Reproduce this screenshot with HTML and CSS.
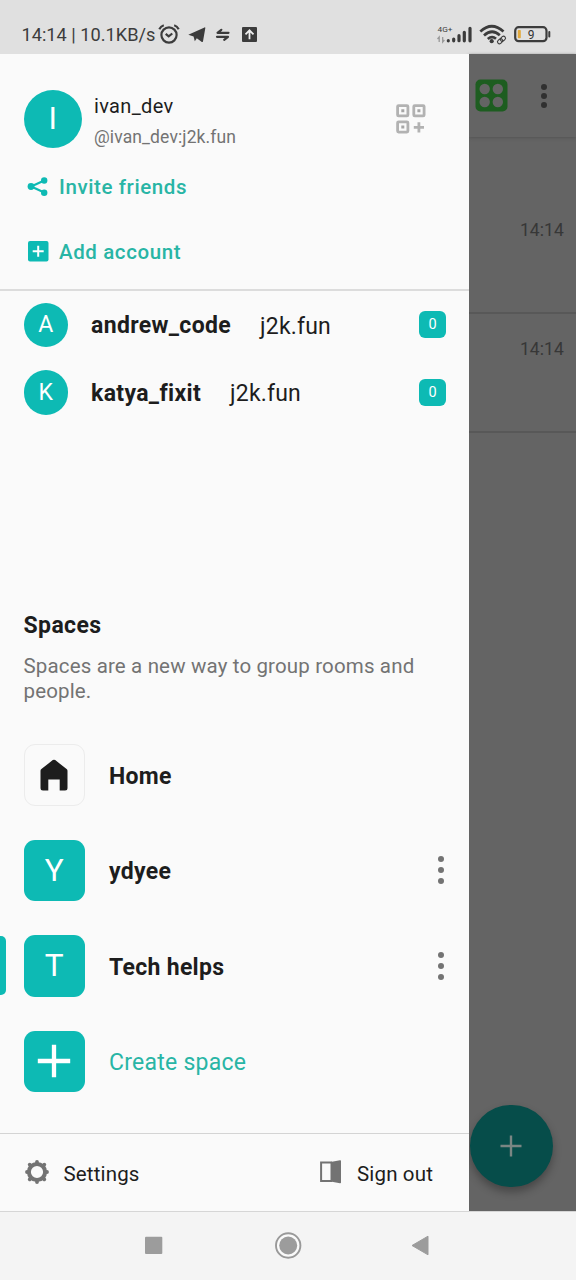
FILE: index.html
```html
<!DOCTYPE html>
<html lang="en">
<head>
<meta charset="utf-8">
<title>Spaces</title>
<link rel="stylesheet" href="styles.css">
</head>
<body>
<div class="screen">
  <header class="status">
    <span class="status-text">14:14 | 10.1KB/s</span>
    <svg class="status-left" width="104" height="26" viewBox="156 21 104 26">
      <g fill="none" stroke="#3c3c3c" stroke-width="2.200">
        <circle cx="169" cy="35" r="7.600"/>
        <path d="M165.700 33.800l3 2.500 3.600-2.800M159.300 29.200q1.500-3 4.500-3.900M178.700 29.200q-1.500-3-4.500-3.900"/>
      </g>
      <path fill="#3c3c3c" d="M188.300 34.800L204.500 27.400c.6-.2 1 .1.8.800L203 41.200c-.2.900-.9 1.100-1.500.6L196.800 38.300l-2 3-1.200-4.700z"/>
      <path fill="none" stroke="#3c3c3c" stroke-width="2.200" stroke-linecap="round" stroke-linejoin="round" d="M228.500 32.800H217.500l3.800-3M217 36.800H228l-3.800 3"/>
      <rect x="242" y="27" width="15" height="15" rx="1" fill="#3c3c3c"/>
      <path fill="none" stroke="#eee" stroke-width="1.800" d="M249.500 39.200V30.500M245.500 34.300l4-4 4 4"/>
    </svg>
    <svg class="status-right" width="120" height="26" viewBox="434 21 120 26">
      <text class="net-label" x="437.500" y="31.500" textLength="15" lengthAdjust="spacingAndGlyphs">4G+</text>
      <path fill="none" stroke="#999" stroke-width="1.300" d="M439.200 42v-5l-1.700 2M442.700 37v5l1.700-2"/>
      <path fill="none" stroke="#3c3c3c" stroke-width="3.200" stroke-linecap="round" d="M448.300 40.700V40.800M453.700 39v1.800M459 35.700v5M464.300 32.300v8.500M470 28.300v12.500"/>
      <g fill="none" stroke="#3c3c3c" stroke-width="2.700">
        <path d="M480.300 31.500q11.500-10.500 23.200 0M484 35.500q8-7.300 15.800-.3M487.800 39q4.200-3.600 8.200-.2"/>
      </g>
      <circle cx="491.700" cy="41.200" r="2.100" fill="#3c3c3c"/>
      <g fill="none" stroke="#e0e0e0" stroke-width="3"><rect x="-4.600" y="-2" width="9.200" height="4" rx="2" transform="translate(501.500 40) rotate(-42)"/></g>
      <g fill="none" stroke="#3c3c3c" stroke-width="1.100" transform="translate(501.500 40) rotate(-42)"><rect x="-4.700" y="-1.900" width="5.600" height="3.800" rx="1.900"/><rect x="-.9" y="-1.900" width="5.600" height="3.800" rx="1.900"/></g>
      <rect x="515.200" y="27.200" width="31.300" height="14" rx="3.500" fill="none" stroke="#3c3c3c" stroke-width="2.200"/>
      <path d="M549.300 32v4.500" stroke="#3c3c3c" stroke-width="2" stroke-linecap="round"/>
      <rect x="517.800" y="30" width="3" height="8.300" rx=".8" fill="#e2a93c"/>
      <text class="battery-label" x="531" y="38.700" text-anchor="middle">9</text>
    </svg>
  </header>

  <div class="body">
    <main class="drawer">
      <section class="account">
        <div class="profile">
          <div class="avatar avatar-lg">I</div>
          <div class="who">
            <div class="name">ivan_dev</div>
            <div class="mxid">@ivan_dev:j2k.fun</div>
          </div>
          <svg class="qr" width="30" height="30" viewBox="0 0 30 30">
            <g fill="none" stroke="#b2b2b2" stroke-width="2.800">
              <rect x="1.600" y="1.600" width="10.300" height="10.300" rx="1"/>
              <rect x="17.800" y="1.600" width="10.300" height="10.300" rx="1"/>
              <rect x="1.600" y="17.800" width="10.300" height="10.300" rx="1"/>
              <path d="M22.900 18.200v10.200M17.800 23.300H28"/>
            </g>
            <path fill="#a6a6a6" d="M5.300 5.300h3v3h-3zM21.400 5.300h3v3h-3zM5.300 21.500h3v3h-3z"/>
          </svg>
        </div>
        <div class="action">
          <svg width="22" height="22" viewBox="0 0 22 22"><path d="M17.200 4.500L4.200 10.500l13 6" fill="none" stroke="#0dbab4" stroke-width="2.200"/><g fill="#0dbab4"><circle cx="17.200" cy="4.500" r="3.200"/><circle cx="4" cy="10.500" r="3.400"/><circle cx="17.200" cy="16.700" r="3.200"/></g></svg>
          <span>Invite friends</span>
        </div>
        <div class="action">
          <svg width="22" height="22" viewBox="0 0 22 22"><rect x="1" y="0" width="20.500" height="20.500" rx="2" fill="#0dbab4"/><path d="M11.200 4.700v11M5.700 10.200h11" stroke="#fff" stroke-width="2"/></svg>
          <span>Add account</span>
        </div>
      </section>

      <section class="others">
        <div class="other"><div class="avatar avatar-sm">A</div><span class="other-name">andrew_code</span><span class="server">j2k.fun</span><span class="badge">0</span></div>
        <div class="other"><div class="avatar avatar-sm">K</div><span class="other-name">katya_fixit</span><span class="server">j2k.fun</span><span class="badge">0</span></div>
      </section>

      <section class="spaces">
        <h2 class="heading">Spaces</h2>
        <p class="intro">Spaces are a new way to group rooms and people.</p>
        <div class="space">
          <div class="tile tile-home"><svg width="28" height="32" viewBox="0 0 28 32"><path fill="#1d1d1d" d="M14 .7q.7 0 1.200.4L26.600 10q.9.700.9 1.800V29q0 2.500-2.500 2.500H19.700V20.600H8.300V31.500H3Q.5 31.500.5 29V11.800q0-1.100.9-1.800L12.800 1.100q.5-.4 1.200-.4z"/></svg></div>
          <span class="space-name">Home</span>
        </div>
        <div class="space"><div class="tile">Y</div><span class="space-name">ydyee</span><span class="more"><i></i><i></i><i></i></span></div>
        <div class="space selected"><div class="tile">T</div><span class="space-name">Tech helps</span><span class="more"><i></i><i></i><i></i></span></div>
        <div class="space">
          <div class="tile"><svg width="34" height="34" viewBox="0 0 34 34"><path d="M17 .8v32.400M.8 17h32.400" stroke="#fff" stroke-width="4.300"/></svg></div>
          <span class="space-name create">Create space</span>
        </div>
      </section>

      <footer class="footer">
        <svg class="gear" width="26" height="26" viewBox="-13 -13 26 26"><circle r="8.100" fill="none" stroke="#737373" stroke-width="4"/><g stroke="#737373" stroke-width="3.800" stroke-linecap="round"><path d="M0-9.800v-.2M0 9.800v.2M-9.800 0h-.2M9.800 0h.2M-7.100-7.100l-.2-.2M7.100-7.100l.2-.2M-7.100 7.100l-.2.2M7.100 7.100l.2.2"/></g></svg>
        <span class="settings">Settings</span>
        <svg class="door" width="22" height="24" viewBox="0 0 22 24"><path d="M12 2.400H1.100V21H12" fill="none" stroke="#737373" stroke-width="2"/><path d="M10.500 2L20 .2q1-.2 1 .8v21.500q0 1-1 .8L10.500 21.500z" fill="#737373"/></svg>
        <span class="signout">Sign out</span>
      </footer>
    </main>

    <aside class="behind">
      <div class="toolbar">
        <svg width="33" height="33" viewBox="0 0 33 33"><rect x=".5" y=".5" width="32" height="32" rx="5" fill="#1d5d20"/><g fill="#646464"><circle cx="9.700" cy="10" r="5.200"/><circle cx="22.800" cy="10" r="5.200"/><circle cx="9.700" cy="23" r="5.200"/><circle cx="22.800" cy="23" r="5.200"/></g></svg>
        <span class="more more-dark"><i></i><i></i><i></i></span>
      </div>
      <div class="room room-first">14:14</div>
      <div class="room">14:14</div>
      <div class="fab"><svg width="22" height="22" viewBox="0 0 22 22"><path d="M11 .5v21M.5 11h21" stroke="#7a8683" stroke-width="2.400"/></svg></div>
    </aside>
  </div>

  <nav class="nav">
    <svg width="576" height="68" viewBox="0 1212 576 68">
      <rect x="145" y="1236.700" width="17.300" height="17.300" rx="1" fill="#9c9c9c"/>
      <circle cx="288.200" cy="1245.500" r="12.200" fill="#fafafa" stroke="#999" stroke-width="1.900"/>
      <circle cx="288.200" cy="1245.500" r="9" fill="#9c9c9c"/>
      <path d="M412 1245.500l16-9.300v18.600z" fill="#9c9c9c" stroke="#9c9c9c" stroke-width="1" stroke-linejoin="round"/>
    </svg>
  </nav>
</div>
</body>
</html>
```
FILE: styles.css
```css
* { box-sizing: border-box; }
body { margin: 0; font-family: Roboto, sans-serif; color: #1d1d1d; }
svg { display: block; flex: none; }
.screen { width: 576px; height: 1280px; display: flex; flex-direction: column; overflow: hidden; background: #fafafa; }

.status { height: 54px; flex: none; background: #e0e0e0; display: flex; align-items: flex-start; padding: 21px 22px 0 21.500px; color: #3c3c3c; }
.status-text { width: 134.500px; font-size: 18.200px; line-height: 28px; letter-spacing: 0; white-space: nowrap; }
.status-right { margin-left: auto; }
.net-label { font-size: 8px; fill: #3c3c3c; }
.battery-label { font-size: 12px; fill: #333; }

.body { height: 1157px; flex: none; display: flex; }
.drawer { width: 469px; flex: none; background: #fafafa; display: flex; flex-direction: column; position: relative; z-index: 1; }

.account { height: 237px; border-bottom: 2px solid #dcdcdc; }
.profile { height: 101px; padding: 35.500px 43px 0 23.500px; display: flex; align-items: flex-start; }
.avatar { border-radius: 50%; background: #0dbab4; color: #fff; display: flex; align-items: center; justify-content: center; flex: none; }
.avatar-lg { width: 58.500px; height: 58.500px; font-size: 31px; font-weight: 400; }
.avatar-sm { width: 44.500px; height: 44.500px; font-size: 23px; font-weight: 400; }
.who { padding: 1.500px 0 0 12px; white-space: nowrap; }
.name { font-size: 20px; line-height: 30px; letter-spacing: .35px; }
.mxid { font-size: 17.500px; line-height: 32px; letter-spacing: .12px; color: #737373; }
.qr { margin: 14.500px 0 0 auto; }
.action { height: 64.500px; display: flex; align-items: center; gap: 10px; padding-left: 27px; color: #28b5a5; font-size: 20.500px; font-weight: 500; white-space: nowrap; letter-spacing: .6px; }

.other { height: 67.500px; padding: 0 23px 0 23.500px; display: flex; align-items: center; font-size: 23px; white-space: nowrap; }
.other-name { margin-left: 23px; padding-top: 2px; font-weight: 700; letter-spacing: .35px; }
.server { margin-left: 29px; padding-top: 3px; letter-spacing: .2px; }
.badge { margin-left: auto; width: 27px; height: 27px; border-radius: 6px; background: #0dbab4; color: #fff; font-size: 14.500px; line-height: 28px; text-align: center; }

.spaces { margin-top: 183px; }
.heading { margin: 0; padding-left: 23.500px; font-size: 23px; line-height: 33px; font-weight: 700; letter-spacing: .4px; }
.intro { margin: 12px 23px 0 23.500px; font-size: 20.500px; line-height: 24.500px; letter-spacing: .15px; color: #737373; }
.space { height: 95.500px; padding: 0 23px 0 23.500px; display: flex; align-items: center; position: relative; }
.intro + .space { margin-top: 24px; }
.tile { width: 61.500px; height: 61.500px; flex: none; border-radius: 11px; background: #0dbab4; color: #fff; font-size: 31.500px; font-weight: 400; display: flex; align-items: center; justify-content: center; }
.tile-home { background: #fafafa; border: 1.500px solid #ececec; }
.space-name { margin-left: 24px; padding-top: 3px; font-size: 23px; font-weight: 700; letter-spacing: .3px; white-space: nowrap; }
.create { font-weight: 400; color: #28b5a5; letter-spacing: .25px; }
.selected::before { content: ""; position: absolute; left: 0; top: 18px; width: 6px; height: 59px; background: #0dbab4; border-radius: 0 5px 5px 0; }
.more { margin-left: auto; margin-right: 2px; display: flex; flex-direction: column; gap: 5px; }
.more i { width: 6px; height: 6px; border-radius: 50%; background: #737373; }

.footer { margin-top: auto; height: 78px; border-top: 1px solid #d4d4d4; display: flex; align-items: center; padding: 0 36px 0 24px; font-size: 20.500px; letter-spacing: .15px; white-space: nowrap; }
.settings { margin-left: 13.500px; padding-top: 2px; }
.gear, .door { margin-bottom: 2px; }
.door { margin-left: auto; }
.signout { margin-left: 15px; padding-top: 2px; }

.behind { flex: 1; background: #646464; position: relative; display: flex; flex-direction: column; }
.toolbar { height: 83px; display: flex; align-items: center; padding: 0 29.500px 0 6px; box-shadow: 0 1px 3px #545454; }
.more-dark { gap: 3px; margin-right: 0; }
.more-dark i { background: #303030; }
.room { height: 119px; border-bottom: 2px solid #585858; padding: 20px 12px 0 0; text-align: right; color: #373737; font-size: 17.500px; line-height: 30px; letter-spacing: .1px; }
.room-first { height: 177px; padding-top: 78px; }
.fab { position: absolute; left: 1px; top: 1050.500px; width: 82.500px; height: 82.500px; border-radius: 50%; background: #064d4a; display: flex; align-items: center; justify-content: center; box-shadow: 0 5px 8px rgba(0,0,0,.3); }

.nav { flex: 1; background: #f4f4f4; border-top: 1px solid #d6d6d6; }
```
